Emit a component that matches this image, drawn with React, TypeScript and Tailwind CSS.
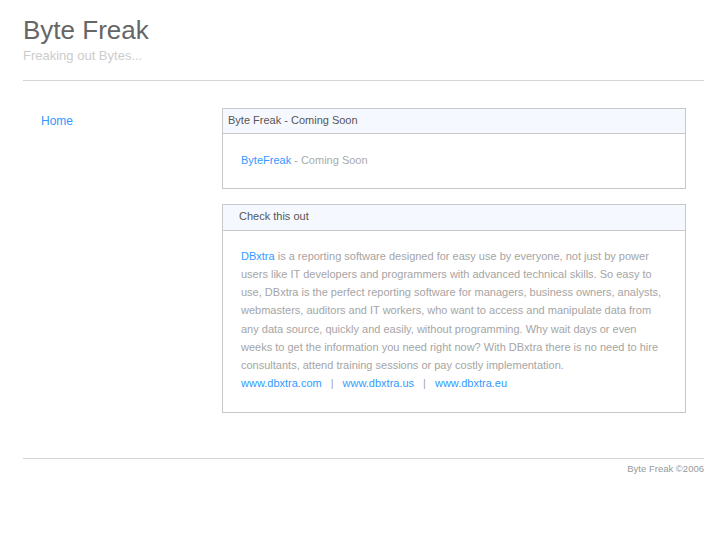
import React from "react";

export default function App() {
  const font = { fontFamily: '"Liberation Sans", Arial, sans-serif' };
  return (
    <div className="min-h-[545px] bg-white px-[23px] pt-[15px]" style={font}>
      <div className="text-[26px] leading-[30px] text-[#666]">Byte Freak</div>
      <div className="mt-[3px] text-[13px] leading-[16px] text-[#ccc]">Freaking out Bytes...</div>
      <div className="mt-[16px] h-px bg-[#d4d4d4]" />
      <div className="mt-[27px] flex">
        <div className="w-[199px] shrink-0 pl-[18px] pt-0">
          <a className="text-[12px] leading-[16px] text-[#3399ff]">Home</a>
        </div>
        <div className="w-[464px] shrink-0">
          <div className="border border-[#c8c8c8]">
            <div className="h-[25px] border-b border-[#c8c8c8] bg-[#f5f9ff] pl-[5px] text-[11px] leading-[22px] text-[#555]">
              Byte Freak - Coming Soon
            </div>
            <div className="pl-[18px] pt-[17px] pb-[19px] text-[11px] leading-[18px] text-[#aaa]">
              <span className="text-[#3399ff]">ByteFreak</span> - Coming Soon
            </div>
          </div>
          <div className="mt-[15px] border border-[#c8c8c8]">
            <div className="h-[26px] border-b border-[#c8c8c8] bg-[#f5f9ff] pl-[16px] text-[11px] leading-[22px] text-[#555]">
              Check this out
            </div>
            <div className="pl-[18px] pr-[20px] pt-[16px] pb-[20px] text-[11px] leading-[18.15px] text-[#a5a5a5]">
              <p>
                <span className="text-[#3399ff]">DBxtra</span> is a reporting software designed for easy use by everyone, not just by power users like IT developers and programmers with advanced technical skills. So easy to use, DBxtra is the perfect reporting software for managers, business owners, analysts, webmasters, auditors and IT workers, who want to access and manipulate data from any data source, quickly and easily, without programming. Why wait days or even weeks to get the information you need right now? With DBxtra there is no need to hire consultants, attend training sessions or pay costly implementation.
              </p>
              <p>
                <span className="text-[#3399ff]">www.dbxtra.com</span>
                <span className="mx-[9px]">|</span>
                <span className="text-[#3399ff]">www.dbxtra.us</span>
                <span className="mx-[9px]">|</span>
                <span className="text-[#3399ff]">www.dbxtra.eu</span>
              </p>
            </div>
          </div>
        </div>
      </div>
      <div className="mt-[45px] h-px bg-[#d4d4d4]" />
      <div className="mt-[4px] text-right text-[9.5px] leading-[12px] text-[#999]">Byte Freak ©2006</div>
    </div>
  );
}
